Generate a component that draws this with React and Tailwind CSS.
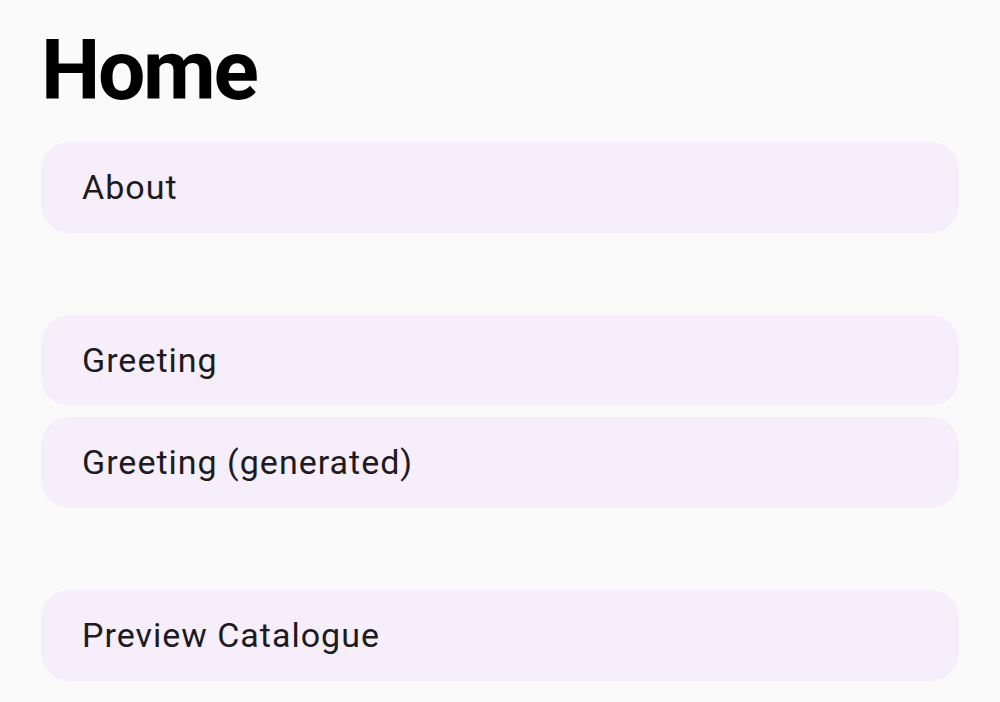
export default function App() {
  const Card = ({ children }) => (
    <div className="h-[91px] rounded-[28px] bg-[#f6eefb] flex items-center pl-[41px] text-[34px] tracking-[1px] text-[#1d1b20]">
      {children}
    </div>
  );
  return (
    <div className="w-[1000px] h-[702px] bg-[#fafafa] px-[41px] pt-[29px] overflow-hidden" style={{ fontFamily: 'Roboto, "Liberation Sans", sans-serif' }}>
      <h1 className="text-[84px] leading-none font-bold tracking-[-2.3px] text-black h-[84px]">Home</h1>
      <div className="mt-[29px]">
        <Card>About</Card>
      </div>
      <div className="mt-[82px] flex flex-col gap-[11px]">
        <Card>Greeting</Card>
        <Card>Greeting (generated)</Card>
      </div>
      <div className="mt-[82px]">
        <Card>Preview Catalogue</Card>
      </div>
    </div>
  );
}
